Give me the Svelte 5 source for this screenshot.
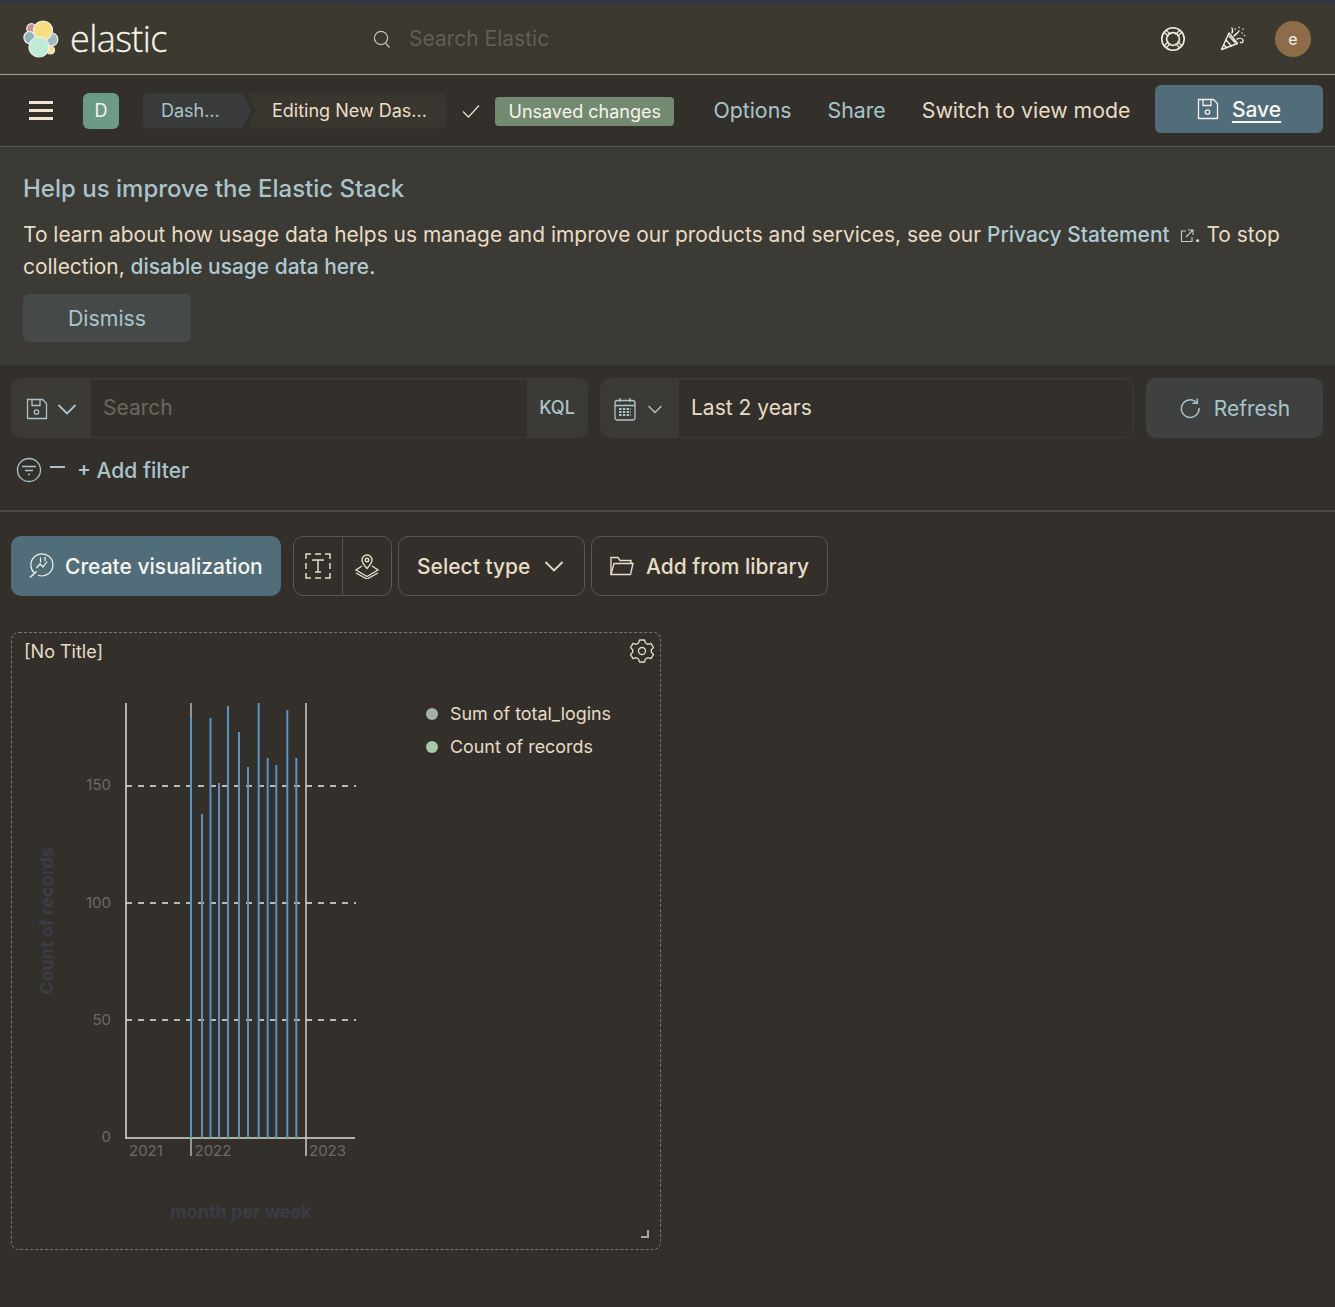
<script>
  // bar x position and top y, as read off the chart
  const bars = [
    [191, 718], [202, 814], [210.5, 718], [219, 783], [228, 706], [239, 732],
    [248, 767], [258.7, 703], [267.7, 758], [276.3, 765], [287.3, 710], [296.3, 758]
  ];
  const grid = [786, 903, 1020];
  const yTicks = [[150, 790], [100, 908], [50, 1025], [0, 1142]];
  const xTicks = [[129, '2021'], [194.5, '2022'], [309, '2023']];
  const chartTop = 690;
</script>

<div class="page">
  <div class="stripe"></div>
  <header class="top">
    <div class="brand">
      <svg class="logo" width="38" height="38" viewBox="0 0 38 38">
        <g stroke="#f4f1e6" stroke-width="1.2">
          <circle cx="9.5" cy="8.5" r="4.8" fill="#c98f98" />
          <ellipse cx="7.5" cy="17.5" rx="5.6" ry="6" fill="#8fb3bb" />
          <ellipse cx="30" cy="19.5" rx="5.8" ry="6.5" fill="#9cbcc2" />
          <circle cx="28.5" cy="30" r="4" fill="#f3e08e" />
          <circle cx="21" cy="10.5" r="9.5" fill="#f6dd83" />
          <circle cx="17" cy="27" r="10" fill="#bdebd8" />
        </g>
      </svg>
      <span class="wordmark">elastic</span>
    </div>
    <div class="global-search">
      <svg width="20" height="20" viewBox="0 0 20 20" fill="none" stroke="#c9c4b6" stroke-width="1.2">
        <circle cx="9" cy="9" r="6.6" /><path d="M13.5 14l4 4.5" />
      </svg>
      <span>Search Elastic</span>
    </div>
    <div class="top-icons">
      <svg width="26" height="26" viewBox="0 0 26 26" fill="none" stroke="#f4efe0" stroke-width="1.6">
        <circle cx="13" cy="13" r="11.2" /><circle cx="13" cy="13" r="6.4" />
        <path d="M4.500 6.500l4 4M6.500 4.500l4 4M21.500 6.500l-4 4M19.500 4.500l-4 4M4.500 19.500l4-4M6.500 21.500l4-4M21.500 19.500l-4-4M19.500 21.500l-4-4" stroke-width="1.100" />
      </svg>
      <svg width="26" height="26" viewBox="0 0 26 26" fill="none" stroke="#f4efe0" stroke-width="1.4" stroke-linecap="round" stroke-linejoin="round">
        <path d="M9 7L1.500 23.500 17.500 17.500z" />
        <path d="M6 14l5.500 6M4 19l2.500 2.500M9 10l6 6.500" />
        <path d="M12 7c1-2 1-3 0-5M14 10c2-2 4-3 5-5M17 13c2-1 5-1 6 1 .5 2-1 3-2.500 2.500M15 3h.1M19 1.500h.1M23 3h.1M22 7h.1M24.500 9.500h.1" />
      </svg>
      <div class="avatar">e</div>
    </div>
  </header>

  <nav class="nav">
    <div class="burger"><i></i><i></i><i></i></div>
    <div class="space">D</div>
    <div class="crumbs">
      <span class="crumb first">Dash...</span>
      <span class="crumb last">Editing New Das...</span>
    </div>
    <svg class="check" width="20" height="20" viewBox="0 0 20 20" fill="none" stroke="#e6dcc8" stroke-width="1.3"><path d="M2 10.500l5.500 5.500L18 4.500" /></svg>
    <span class="unsaved">Unsaved changes</span>
    <div class="nav-links">
      <span class="blue">Options</span>
      <span class="blue">Share</span>
      <span class="sand">Switch to view mode</span>
    </div>
    <button class="save">
      <svg width="22" height="22" viewBox="0 0 22 22" fill="none" stroke="#f2f0ea" stroke-width="1.300">
        <path d="M1.500 1.500h15l4 4v15h-19z" /><path d="M6 1.500v6h8v-6" /><circle cx="10.500" cy="14" r="2.200" />
      </svg>
      <span>Save</span>
    </button>
  </nav>

  <section class="banner">
    <h2>Help us improve the Elastic Stack</h2>
    <p>
      To learn about how usage data helps us manage and improve our products and services, see our
      <span class="link">Privacy Statement</span>
      <svg class="ext" width="16" height="16" viewBox="0 0 16 16" fill="none" stroke="#c6cdc8" stroke-width="1.100"><path d="M7 3H2.500v10.500H13V9M9 2h5v5M14 2L7 9" /></svg>. To stop collection, <span class="link">disable usage data here</span>.
    </p>
    <button class="dismiss">Dismiss</button>
  </section>

  <section class="query">
    <div class="query-row">
      <div class="group search-group">
        <div class="prepend save-pre">
          <svg width="22" height="22" viewBox="0 0 22 22" fill="none" stroke="#aac4cc" stroke-width="1.300">
            <path d="M1.500 1.500h15l4 4v15h-19z" /><path d="M6 1.500v6h8v-6" /><circle cx="10.500" cy="14" r="2.200" />
          </svg>
          <svg width="20" height="12" viewBox="0 0 20 12" fill="none" stroke="#aac4cc" stroke-width="1.800"><path d="M1.500 2l8.500 8.500L18.500 2" /></svg>
        </div>
        <div class="field muted">Search</div>
        <div class="kql">KQL</div>
      </div>
      <div class="group date-group">
        <div class="prepend date-pre">
          <svg width="22" height="24" viewBox="0 0 22 24" fill="none" stroke="#aac4cc" stroke-width="1.300">
            <rect x="1" y="3.500" width="20" height="19.500" rx="2.500" /><path d="M1 8.500h20M6 1v4M16 1v4" />
            <path d="M5 12h12M5 15h12M5 18h12" stroke-width="2" stroke-dasharray="2.500 1.300" />
          </svg>
          <svg width="16" height="10" viewBox="0 0 16 10" fill="none" stroke="#aac4cc" stroke-width="1.400"><path d="M1.500 2L8 8.500 14.500 2" /></svg>
        </div>
        <div class="field sand">Last 2 years</div>
      </div>
      <button class="refresh">
        <svg width="22" height="22" viewBox="0 0 22 22" fill="none" stroke="#aac4cc" stroke-width="1.500">
          <path d="M17.500 5.500A8.800 8.800 0 1 0 20 11" /><path d="M18.300 1.500v4.800h-4.800" />
        </svg>
        <span>Refresh</span>
      </button>
    </div>
    <div class="filter-row">
      <svg width="26" height="26" viewBox="0 0 26 26" fill="none" stroke="#aac4cc" stroke-width="1.300">
        <circle cx="13" cy="13" r="11.500" /><path d="M6 9.500h14M9 13.500h8M12 17.500h2" />
      </svg>
      <i class="dash"></i>
      <span class="add-filter">+ Add filter</span>
    </div>
  </section>

  <div class="toolbar">
    <button class="create">
      <svg width="26" height="26" viewBox="0 0 26 26" fill="none" stroke="#f4f2ea" stroke-width="1.200">
        <path d="M6.200 19.800A11 11 0 1 1 10.200 22.300" /><path d="M2 24.500l6.500-6" stroke-width="1.500" />
        <path d="M8.500 15l3.500-4 3 3 4-5.500M12.500 4.500v5M17 4v4" />
      </svg>
      <span>Create visualization</span>
    </button>
    <div class="tool-pair">
      <div class="tool">
        <svg width="26" height="26" viewBox="0 0 26 26" fill="none" stroke="#e6dcc8" stroke-width="1.500">
          <path d="M1 6V1h5M20 1h5v5M25 20v5h-5M6 25H1v-5M1 10v6M25 10v6M10 1h6M10 25h6" />
          <path d="M8 8V7h10v1M13 7v12M10 19h6" />
        </svg>
      </div>
      <div class="tool">
        <svg width="26" height="26" viewBox="0 0 26 26" fill="none" stroke="#e6dcc8" stroke-width="1.400">
          <path d="M13 15.500c-3-3.500-5-5.500-5-8.500a5 5 0 0 1 10 0c0 3-2 5-5 8.500z" /><circle cx="13" cy="7" r="1.800" />
          <path d="M8 13l-6 4 11 6.500L24 17l-6-4M2 20l11 6 11-6" />
        </svg>
      </div>
    </div>
    <button class="outline select">
      <span>Select type</span>
      <svg width="20" height="12" viewBox="0 0 20 12" fill="none" stroke="#e6dcc8" stroke-width="1.800"><path d="M1.500 2l8.500 8.500L18.500 2" /></svg>
    </button>
    <button class="outline library">
      <svg width="24" height="20" viewBox="0 0 24 20" fill="none" stroke="#e6dcc8" stroke-width="1.400">
        <path d="M1 18.500V1.500h7l2 3h11v3" /><path d="M1 18.500L4 7.500h19l-2.500 11z" />
      </svg>
      <span>Add from library</span>
    </button>
  </div>

  <div class="panel">
    <div class="panel-head">
      <span>[No Title]</span>
      <svg class="gear" width="26" height="26" viewBox="0 0 26 26" fill="none" stroke="#e6dcc8" stroke-width="1.300" stroke-linejoin="round">
        <path d="M10.500 2h5l1 3 2.500 1.300 3-1 2.500 4.300-2.200 2.200v2.400l2.200 2.200-2.500 4.300-3-1-2.500 1.300-1 3h-5l-1-3L7 19.700l-3 1-2.500-4.300 2.200-2.200v-2.400L1.500 9.600 4 5.300l3 1 2.500-1.300z" />
        <circle cx="13" cy="13" r="3.500" />
      </svg>
    </div>
    <div class="panel-body">
      <svg class="chart" width="400" height="560" viewBox="0 {chartTop} 400 560">
        <g class="tick-labels">
          {#each yTicks as [v, y]}
            <text x="111" y={y} text-anchor="end">{v}</text>
          {/each}
          {#each xTicks as [x, label]}
            <text x={x} y="1156">{label}</text>
          {/each}
        </g>
        {#each grid as y}
          <line x1="126" x2="356" y1={y} y2={y} stroke="#e8e6e2" stroke-width="1.300" stroke-dasharray="6 6" />
        {/each}
        <line x1="126" x2="126" y1="703" y2="1139" stroke="#d5d3cf" stroke-width="1.600" />
        <line x1="126" x2="355" y1="1138" y2="1138" stroke="#dcdad6" stroke-width="1.600" />
        <line x1="191" x2="191" y1="703" y2="1156" stroke="#cfcdc8" stroke-width="1.300" />
        <line x1="306" x2="306" y1="703" y2="1156" stroke="#cfcdc8" stroke-width="1.500" />
        {#each bars as [x, top]}
          <line x1={x} x2={x} y1={top} y2="1138" stroke="#5b92c2" stroke-width="2" />
          <line x1={x} x2={x} y1="1136" y2="1138" stroke="#4fa296" stroke-width="2" />
        {/each}
        <text class="axis-title" transform="translate(53 921) rotate(-90)" text-anchor="middle">Count of records</text>
        <text class="axis-title" x="241" y="1218" text-anchor="middle">month per week</text>
      </svg>
      <ul class="legend">
        <li><i class="dot gray"></i>Sum of total_logins</li>
        <li><i class="dot green"></i>Count of records</li>
      </ul>
    </div>
    <svg class="resize" width="10" height="10" viewBox="0 0 10 10" fill="none" stroke="#a8a6a0" stroke-width="2"><path d="M1 8h7V1" /></svg>
  </div>
</div>

<style>
  :global(body) {
    margin: 0;
    background: #33302b;
    font-family: Inter, "Liberation Sans", sans-serif;
  }
  button {
    font-family: inherit;
    cursor: pointer;
  }
  .page {
    height: 1307px;
    overflow: hidden;
    background: #33302b;
  }
  .stripe {
    height: 3px;
    background: #2f3446;
  }
  .top {
    height: 71px;
    background: #3c3931;
    border-bottom: 1px solid #a89a86;
    display: flex;
    align-items: center;
  }
  .brand {
    display: flex;
    align-items: center;
    gap: 10px;
    width: 360px;
    padding-left: 22px;
    box-sizing: border-box;
  }
  .wordmark {
    font-family: "Open Sans", sans-serif;
    font-weight: 300;
    font-size: 36px;
    line-height: 38px;
    color: #f8f4e6;
    letter-spacing: -0.6px;
    -webkit-text-stroke: 0.3px #f8f4e6;
  }
  .global-search {
    width: 600px;
    height: 48px;
    box-sizing: border-box;
    display: flex;
    align-items: center;
    gap: 17px;
    padding-left: 11px;
    background: #3b3830;
    border: 1px solid #38352e;
    border-radius: 6px;
    font-size: 21px;
    color: #625e55;
  }
  .top-icons {
    margin-left: auto;
    padding-right: 24px;
    display: flex;
    align-items: center;
    gap: 34px;
  }
  .avatar {
    width: 36px;
    height: 36px;
    margin-left: -5px;
    border-radius: 50%;
    background: #8c6c49;
    color: #f8f4e6;
    font-size: 16px;
    display: flex;
    align-items: center;
    justify-content: center;
  }
  .nav {
    height: 71px;
    border-bottom: 1px solid #5a564f;
    display: flex;
    align-items: center;
    padding: 0 12px 0 29px;
  }
  .burger {
    width: 24px;
    display: flex;
    flex-direction: column;
    gap: 5px;
    margin-right: 30px;
  }
  .burger i {
    display: block;
    height: 3px;
    background: #f0e4cd;
  }
  .space {
    width: 36px;
    height: 36px;
    border-radius: 6px;
    background: #6b9b85;
    color: #f5f5ee;
    font-size: 18px;
    display: flex;
    align-items: center;
    justify-content: center;
    margin-right: 24px;
  }
  .crumbs {
    display: flex;
    height: 36px;
    font-size: 18px;
    line-height: 36px;
  }
  .crumb {
    display: block;
    box-sizing: border-box;
  }
  .first {
    width: 108px;
    padding-left: 18px;
    color: #a9c4cb;
    background: #393c3a;
    border-radius: 6px 0 0 6px;
    clip-path: polygon(0 0, 92% 0, 100% 50%, 92% 100%, 0 100%);
  }
  .last {
    width: 200px;
    margin-left: -4px;
    padding-left: 25px;
    color: #ecdfc7;
    background: #39362f;
    border-radius: 0 6px 6px 0;
    clip-path: polygon(0 0, 100% 0, 100% 100%, 0 100%, 9px 50%);
  }
  .check {
    margin-left: 14px;
  }
  .unsaved {
    margin: 2px 0 0 14px;
    height: 29px;
    line-height: 29px;
    padding: 0 13.500px;
    border-radius: 4px;
    background: #748a70;
    color: #f6f4ec;
    font-size: 18px;
    white-space: nowrap;
  }
  .nav-links {
    display: flex;
    gap: 36px;
    margin: -2px 0 0 39px;
    font-size: 21.300px;
    white-space: nowrap;
  }
  .blue {
    color: #a9c4cb;
  }
  .sand {
    color: #e8dcc6;
  }
  .save {
    margin: -3px 0 0 auto;
    width: 168px;
    height: 48px;
    border: none;
    border-radius: 6px;
    background: #516d7a;
    color: #f6f5ef;
    font-size: 21px;
    font-weight: 500;
    display: flex;
    align-items: center;
    justify-content: center;
    gap: 13px;
  }
  .save span {
    text-decoration: underline;
    text-underline-offset: 4px;
  }
  .banner {
    height: 218px;
    box-sizing: border-box;
    background: #3c3a34;
    padding: 26px 23px 0;
  }
  .banner h2 {
    margin: 0;
    font-size: 24px;
    line-height: 32px;
    font-weight: 500;
    color: #a9c4cb;
  }
  .banner p {
    margin: 14px 0 11px;
    font-size: 20.950px;
    line-height: 32px;
    color: #e8dcc6;
  }
  .link {
    color: #aecad2;
    font-weight: 500;
  }
  .ext {
    vertical-align: -2px;
    margin-left: 3px;
  }
  .dismiss {
    display: block;
    width: 168px;
    height: 48px;
    border: none;
    border-radius: 6px;
    background: #454a49;
    color: #a9c4cb;
    font-size: 21.300px;
  }
  .query {
    height: 147px;
    box-sizing: border-box;
    padding: 13px 12px 0 11px;
    border-bottom: 2px solid #4c4943;
  }
  .query-row {
    display: flex;
    gap: 12px;
    height: 60px;
  }
  .group {
    display: flex;
    box-sizing: border-box;
    height: 60px;
    border-radius: 10px;
    overflow: hidden;
    border: 1px solid #3c3a34;
    border-top-width: 2px;
    font-size: 21px;
  }
  .search-group {
    width: 577px;
  }
  .date-group {
    width: 534px;
  }
  .prepend {
    background: #3c3a34;
    display: flex;
    align-items: center;
    flex: none;
  }
  .save-pre {
    width: 79px;
    padding-left: 14px;
    gap: 9px;
    box-sizing: border-box;
  }
  .date-pre {
    width: 78px;
    padding-left: 13px;
    gap: 11px;
    box-sizing: border-box;
  }
  .field {
    flex: 1;
    display: flex;
    align-items: center;
    padding: 0 0 2px 12px;
  }
  .muted {
    color: #6b675e;
  }
  .kql {
    width: 60px;
    background: #3c3a34;
    color: #a9c4cb;
    font-size: 18px;
    font-weight: 500;
    display: flex;
    align-items: center;
    justify-content: center;
    padding-bottom: 2px;
    box-sizing: border-box;
  }
  .refresh {
    width: 177px;
    height: 60px;
    border: none;
    border-radius: 10px;
    background: #3e4140;
    color: #a9c4cb;
    font-size: 21px;
    display: flex;
    align-items: center;
    justify-content: center;
    gap: 13px;
  }
  .filter-row {
    display: flex;
    align-items: center;
    margin: 16px 0 0 5px;
    height: 32px;
  }
  .dash {
    display: block;
    width: 15px;
    height: 2px;
    background: #a9c4cb;
    margin: -6px 0 0 8px;
  }
  .add-filter {
    margin-left: 12px;
    font-size: 21px;
    font-weight: 500;
    color: #a9c4cb;
  }
  .toolbar {
    display: flex;
    padding: 24px 0 0 11px;
    height: 60px;
  }
  .create {
    width: 270px;
    height: 60px;
    border: none;
    border-radius: 10px;
    background: #516d7a;
    color: #f6f5ef;
    font-size: 21px;
    font-weight: 500;
    display: flex;
    align-items: center;
    gap: 11px;
    padding: 0 0 0 17px;
    white-space: nowrap;
  }
  .tool-pair {
    margin-left: 12px;
    width: 99px;
    height: 60px;
    box-sizing: border-box;
    border: 1px solid #5a5750;
    border-radius: 10px;
    display: flex;
  }
  .tool {
    flex: 1;
    display: flex;
    align-items: center;
    justify-content: center;
  }
  .tool + .tool {
    border-left: 1px solid #5a5750;
  }
  .outline {
    height: 60px;
    border: 1px solid #5a5750;
    border-radius: 10px;
    background: transparent;
    color: #e8dcc6;
    font-size: 21px;
    font-weight: 500;
    display: flex;
    align-items: center;
    white-space: nowrap;
    margin-left: 6px;
  }
  .select {
    width: 187px;
    padding: 0 0 0 18px;
    gap: 14px;
  }
  .library {
    width: 237px;
    padding: 0 0 0 18px;
    gap: 12px;
  }
  .panel {
    position: relative;
    margin: 36px 0 0 11px;
    width: 650px;
    height: 618px;
    box-sizing: border-box;
    border: 1px dashed #7a766e;
    border-radius: 8px;
  }
  .panel-head {
    display: flex;
    justify-content: space-between;
    align-items: center;
    padding: 2px 5px 0 12px;
    height: 32px;
    color: #e8dcc6;
    font-size: 18px;
  }
  .panel-body {
    display: flex;
    align-items: flex-start;
  }
  .chart {
    display: block;
    flex: none;
    margin: 23px 0 0 -12px;
    overflow: visible;
  }
  .tick-labels text {
    fill: #6a6a6c;
    font-size: 15px;
  }
  .axis-title {
    fill: #3a3c47;
    font-size: 18px;
    font-weight: 700;
  }
  .legend {
    list-style: none;
    margin: 30px 0 0 26px;
    padding: 0;
    color: #e8dcc6;
    font-size: 17.900px;
  }
  .legend li {
    display: flex;
    align-items: center;
    height: 33px;
  }
  .dot {
    width: 12px;
    height: 12px;
    border-radius: 50%;
    margin-right: 12px;
  }
  .gray {
    background: #a6b0ad;
  }
  .green {
    background: #a9c8a6;
  }
  .resize {
    position: absolute;
    right: 10px;
    bottom: 10px;
  }
</style>
